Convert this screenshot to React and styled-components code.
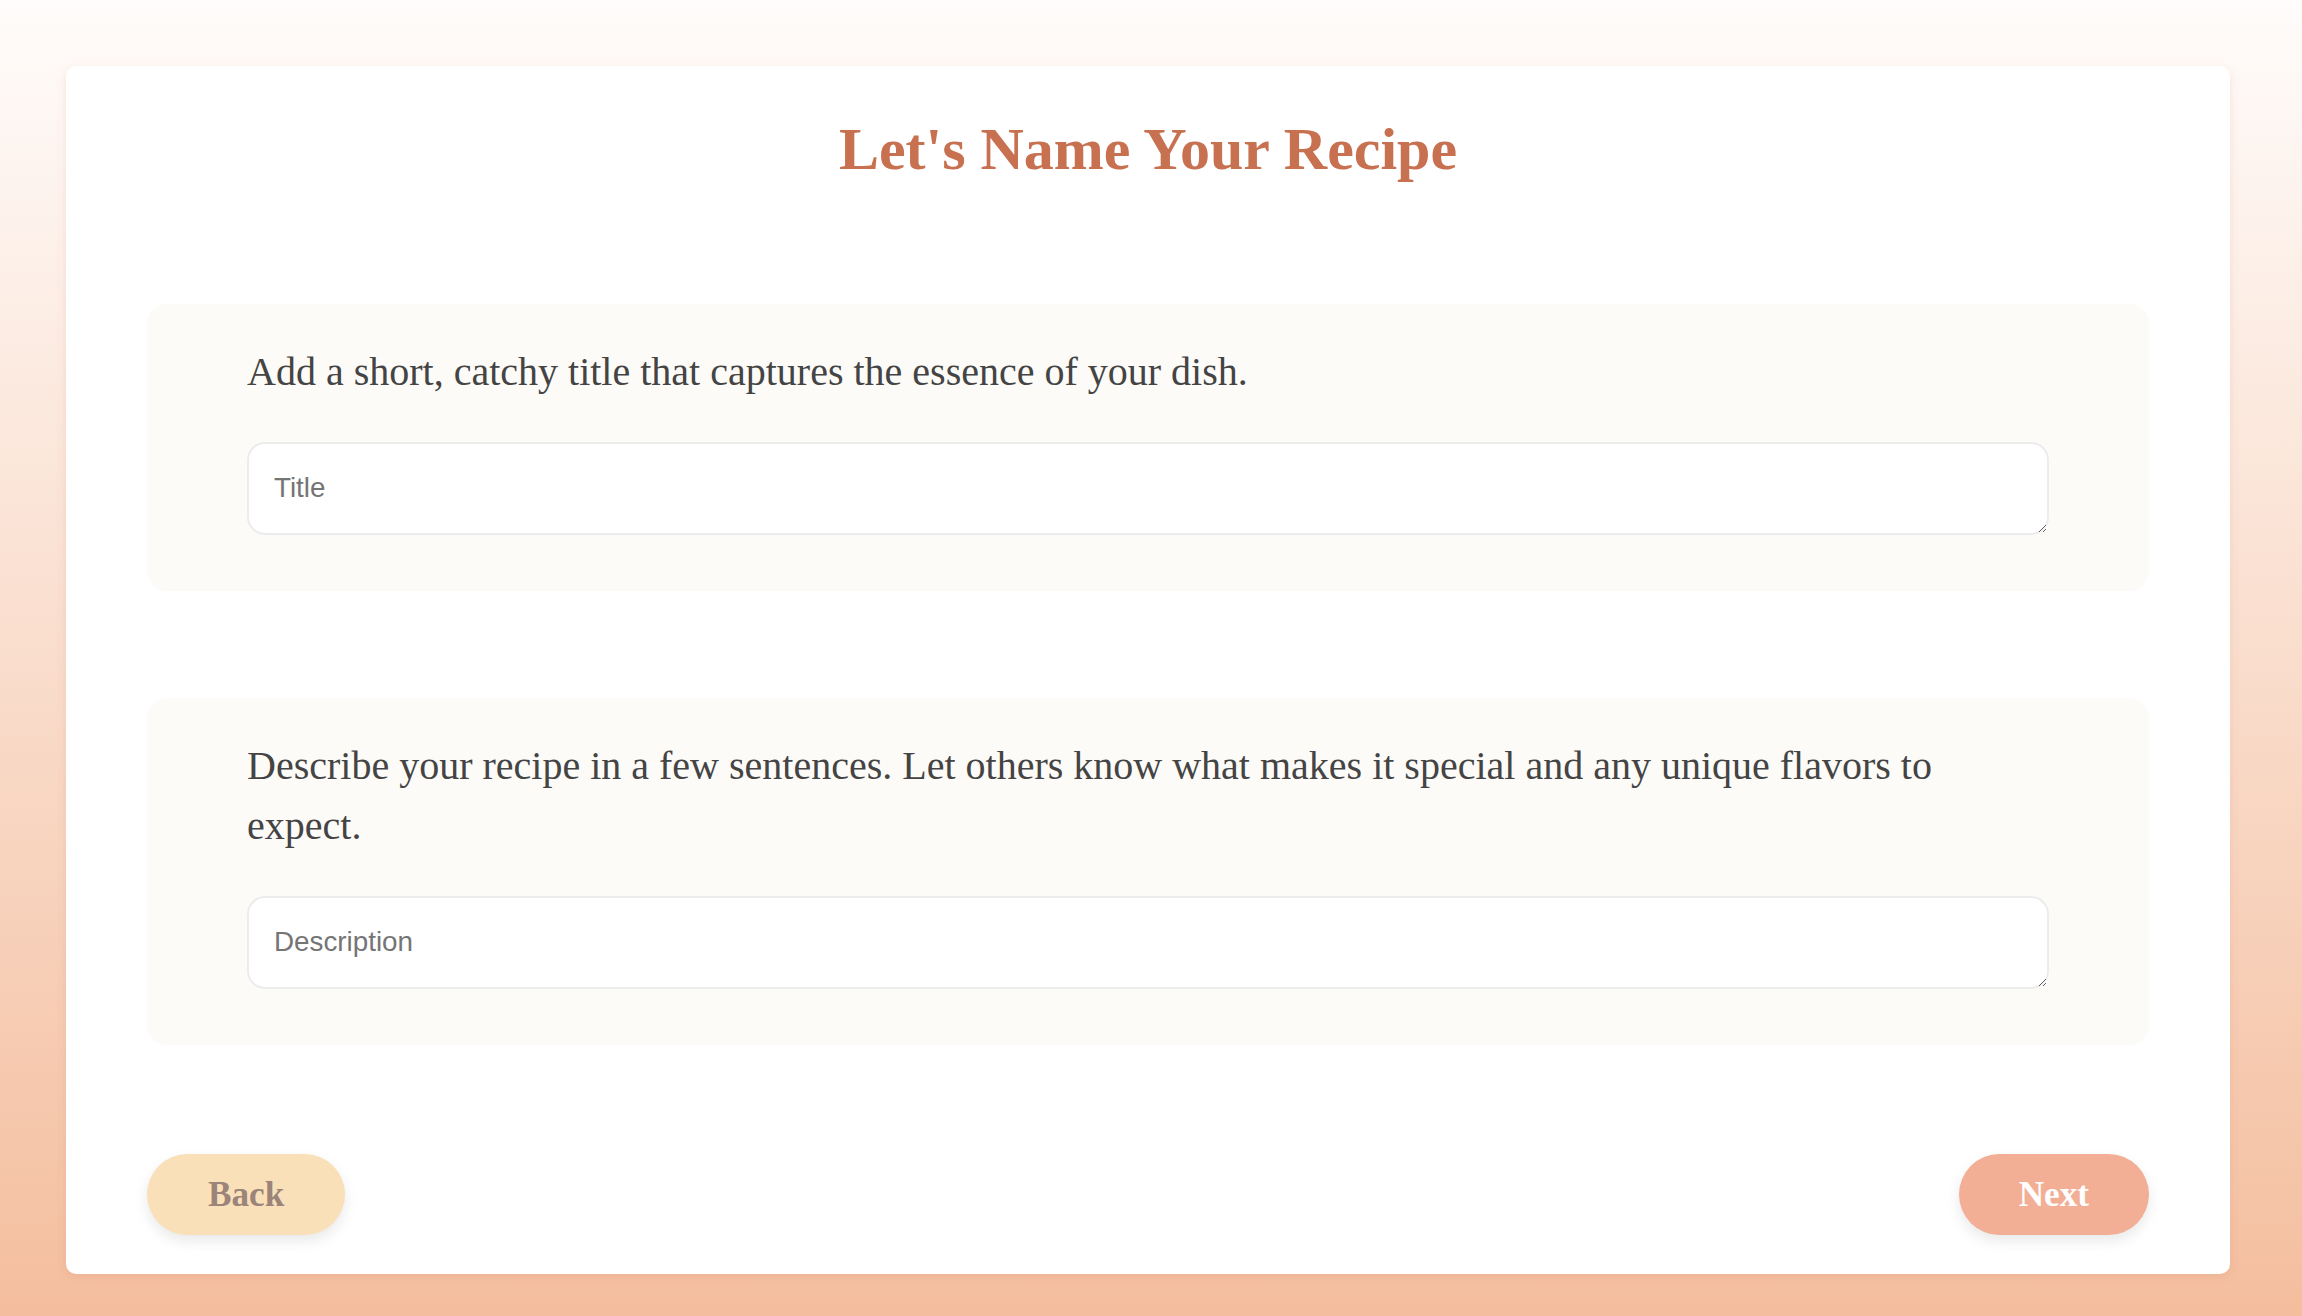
import React, { useState } from "react";
import styled, { createGlobalStyle } from "styled-components";

const GlobalStyle = createGlobalStyle`
  html, body {
    margin: 0;
    padding: 0;
  }
  body {
    min-height: 100vh;
    background: linear-gradient(180deg, #fffcfb 0%, #f4be9e 100%);
    font-family: "Liberation Serif", "Times New Roman", serif;
  }
`;

const Page = styled.div`
  box-sizing: border-box;
  min-height: 100vh;
  padding: 66px 72px 42px 66px;
`;

const Card = styled.div`
  box-sizing: border-box;
  background: #ffffff;
  border-radius: 10px;
  box-shadow: 0 3px 10px rgba(190, 120, 90, 0.16);
  padding: 49px 81px 39px;
  display: flex;
  flex-direction: column;
`;

const Heading = styled.h1`
  margin: 0 0 120px;
  text-align: center;
  font-family: "Liberation Serif", "Times New Roman", serif;
  font-weight: 700;
  font-size: 60px;
  line-height: 1.15;
  color: #c87150;
`;

const Section = styled.section`
  background: #fdfbf8;
  border-radius: 20px;
  padding: 38px 100px 56px;
  margin-bottom: ${(p) => (p.last ? "109px" : "107px")};
  display: flex;
  flex-direction: column;
  gap: 40px;
`;

const Prompt = styled.p`
  margin: 0;
  font-family: "Liberation Serif", "Times New Roman", serif;
  font-size: 40px;
  line-height: 60px;
  color: #444444;
`;

const Field = styled.textarea`
  box-sizing: border-box;
  display: block;
  width: 100%;
  height: 93px;
  min-height: 60px;
  margin: 0;
  padding: 26px 25px;
  border: 2px solid #ececec;
  border-radius: 18px;
  background: #ffffff;
  font-family: "Liberation Sans", Arial, sans-serif;
  font-size: 27.8px;
  line-height: 36px;
  color: #333333;
  resize: vertical;
  outline: none;

  &::placeholder {
    color: #757575;
  }
`;

const Footer = styled.div`
  display: flex;
  justify-content: space-between;
  align-items: center;
`;

const NavButton = styled.button`
  height: 81px;
  padding: 0 ${(p) => (p.primary ? "60px" : "61px")};
  border: none;
  border-radius: 41px;
  background: ${(p) => (p.primary ? "#f2af96" : "#f9e0b8")};
  color: ${(p) => (p.primary ? "#ffffff" : "#9b8479")};
  font-family: "Liberation Serif", "Times New Roman", serif;
  font-weight: 700;
  font-size: 35.2px;
  box-shadow: 0 6px 14px rgba(0, 0, 0, 0.09);
  cursor: pointer;
`;

export default function App() {
  const [title, setTitle] = useState("");
  const [description, setDescription] = useState("");

  return (
    <>
      <GlobalStyle />
      <Page>
        <Card>
          <Heading>Let's Name Your Recipe</Heading>

          <Section>
            <Prompt>
              Add a short, catchy title that captures the essence of your dish.
            </Prompt>
            <Field
              placeholder="Title"
              value={title}
              onChange={(e) => setTitle(e.target.value)}
            />
          </Section>

          <Section last>
            <Prompt>
              Describe your recipe in a few sentences. Let others know what
              makes it special and any unique flavors to expect.
            </Prompt>
            <Field
              placeholder="Description"
              value={description}
              onChange={(e) => setDescription(e.target.value)}
            />
          </Section>

          <Footer>
            <NavButton>Back</NavButton>
            <NavButton primary>Next</NavButton>
          </Footer>
        </Card>
      </Page>
    </>
  );
}
